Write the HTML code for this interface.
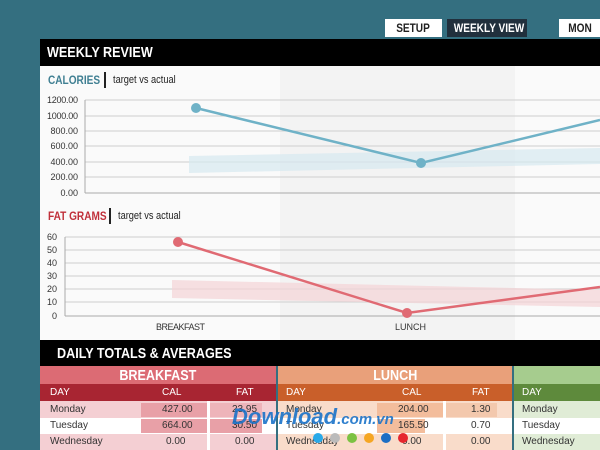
<!DOCTYPE html>
<html><head><style>
*{margin:0;padding:0;box-sizing:border-box}
body{width:600px;height:450px;overflow:hidden;background:#346f80;font-family:"Liberation Sans",sans-serif;position:relative}
.a{position:absolute}
.n{display:inline-block;transform:scaleX(.84);transform-origin:0 0;white-space:nowrap}
.c{display:inline-block;transform:scaleX(.84);transform-origin:50% 0;white-space:nowrap}
.btn{position:absolute;top:19px;height:18px;font-size:12px;font-weight:bold;text-align:center;line-height:18px}
.t{font-size:11px;color:#222}
.cell{position:absolute;font-size:10px;color:#333;line-height:16px}
</style></head><body>
<div class="btn" style="left:385px;width:57px;background:#fff;color:#222"><span class="c">SETUP</span></div>
<div class="btn" style="left:447px;width:80px;background:#21303d;color:#fff"><span class="c">WEEKLY VIEW</span></div>
<div class="btn" style="left:559px;width:41px;background:#fff;color:#222"><span class="c">MON</span></div>
<div class="a" style="left:40px;top:39px;width:560px;height:27px;background:#000;color:#fff;font-size:15px;font-weight:bold;line-height:28px;padding-left:7px"><span class="n">WEEKLY REVIEW</span></div>
<div class="a" style="left:40px;top:66px;width:560px;height:274px;background:#fafafa"></div>
<div class="a" style="left:280px;top:66px;width:235px;height:274px;background:#f3f3f3"></div>
<div class="a" style="left:48px;top:73px;font-size:12px;font-weight:bold;color:#3f7f92"><span class="n">CALORIES</span></div>
<div class="a" style="left:104px;top:72px;width:2px;height:16px;background:#222"></div>
<div class="a t" style="left:113px;top:74px"><span class="n">target vs actual</span></div>
<div class="a" style="left:48px;top:209px;font-size:12px;font-weight:bold;color:#c0303a"><span class="n">FAT GRAMS</span></div>
<div class="a" style="left:109px;top:208px;width:2px;height:16px;background:#222"></div>
<div class="a t" style="left:118px;top:210px"><span class="n">target vs actual</span></div>
<svg class="a" style="left:0;top:0" width="600" height="340" font-family="Liberation Sans" font-size="9" fill="#333">
<g stroke="#cfcfcf" stroke-width="1">
<line x1="85" y1="100" x2="600" y2="100"/><line x1="85" y1="116" x2="600" y2="116"/><line x1="85" y1="131" x2="600" y2="131"/><line x1="85" y1="146" x2="600" y2="146"/><line x1="85" y1="162" x2="600" y2="162"/><line x1="85" y1="177" x2="600" y2="177"/>
<line x1="65" y1="237" x2="600" y2="237"/><line x1="65" y1="250" x2="600" y2="250"/><line x1="65" y1="263" x2="600" y2="263"/><line x1="65" y1="276" x2="600" y2="276"/><line x1="65" y1="289" x2="600" y2="289"/><line x1="65" y1="302" x2="600" y2="302"/>
</g>
<g stroke="#aaa"><line x1="85" y1="100" x2="85" y2="193"/><line x1="85" y1="193" x2="600" y2="193"/><line x1="65" y1="237" x2="65" y2="316"/><line x1="65" y1="316" x2="600" y2="316"/></g>
<g text-anchor="end"><text x="78" y="103" textLength="31">1200.00</text><text x="78" y="119" textLength="31">1000.00</text><text x="78" y="134">800.00</text><text x="78" y="149">600.00</text><text x="78" y="165">400.00</text><text x="78" y="180">200.00</text><text x="78" y="196">0.00</text>
<text x="57" y="240">60</text><text x="57" y="253">50</text><text x="57" y="266">40</text><text x="57" y="279">30</text><text x="57" y="292">20</text><text x="57" y="305">10</text><text x="57" y="319">0</text></g>
<polygon points="189,156 600,148 600,164 189,173" fill="#d6e8ef" opacity="0.7"/>
<polygon points="172,280 600,290 600,307 172,298" fill="#f3d3d5" opacity="0.7"/>
<polyline points="196,108 421,163 600,120" fill="none" stroke="#6fb2c7" stroke-width="2.5"/>
<circle cx="196" cy="108" r="5" fill="#6fb2c7"/><circle cx="421" cy="163" r="5" fill="#6fb2c7"/>
<polyline points="178,242 407,313 600,287" fill="none" stroke="#e06a73" stroke-width="2.5"/>
<circle cx="178" cy="242" r="5" fill="#e06a73"/><circle cx="407" cy="313" r="5" fill="#e06a73"/>
<text x="156" y="330" textLength="49">BREAKFAST</text><text x="395" y="330">LUNCH</text>
</svg>
<div class="a" style="left:40px;top:340px;width:560px;height:26px;background:#000;color:#fff;font-size:15px;font-weight:bold;line-height:27px;padding-left:17px"><span class="n">DAILY TOTALS &amp; AVERAGES</span></div>
<div class="a" style="left:40px;top:366px;width:236px;height:18px;background:#dc6b74;color:#fff;font-weight:bold;font-size:15px;text-align:center;line-height:19px"><span class="c">BREAKFAST</span></div>
<div class="a" style="left:40px;top:384px;width:236px;height:17px;background:#a82532"></div>
<div class="a" style="left:40px;top:401px;width:236px;height:17px;background:#f4cfd3"></div>
<div class="a" style="left:40px;top:418px;width:236px;height:16px;background:#fff"></div>
<div class="a" style="left:40px;top:434px;width:236px;height:16px;background:#f4cfd3"></div>
<div class="a" style="left:141px;top:403px;width:66px;height:14px;background:#e8a0a7"></div>
<div class="a" style="left:141px;top:419px;width:66px;height:14px;background:#e8a0a7"></div>
<div class="a" style="left:210px;top:403px;width:52px;height:14px;background:#eeb4ba"></div>
<div class="a" style="left:210px;top:419px;width:52px;height:14px;background:#e8a0a7"></div>
<div class="a" style="left:207px;top:401px;width:3px;height:49px;background:#fff"></div>
<div class="cell" style="left:50px;top:385px;color:#fff">DAY</div><div class="cell" style="left:162px;top:385px;color:#fff">CAL</div><div class="cell" style="left:236px;top:385px;color:#fff">FAT</div>
<div class="cell" style="left:50px;top:402px">Monday</div><div class="cell" style="left:162px;top:402px">427.00</div><div class="cell" style="left:232px;top:402px">23.95</div>
<div class="cell" style="left:50px;top:418px">Tuesday</div><div class="cell" style="left:162px;top:418px">664.00</div><div class="cell" style="left:232px;top:418px">30.50</div>
<div class="cell" style="left:50px;top:434px">Wednesday</div><div class="cell" style="left:166px;top:434px">0.00</div><div class="cell" style="left:235px;top:434px">0.00</div>
<div class="a" style="left:276px;top:366px;width:2px;height:84px;background:#346f80"></div>
<div class="a" style="left:278px;top:366px;width:234px;height:18px;background:#e9a07a;color:#fff;font-weight:bold;font-size:15px;text-align:center;line-height:19px"><span class="c">LUNCH</span></div>
<div class="a" style="left:278px;top:384px;width:234px;height:17px;background:#c95f2a"></div>
<div class="a" style="left:278px;top:401px;width:234px;height:17px;background:#f9dcca"></div>
<div class="a" style="left:278px;top:418px;width:234px;height:16px;background:#fff"></div>
<div class="a" style="left:278px;top:434px;width:234px;height:16px;background:#f9dcca"></div>
<div class="a" style="left:377px;top:403px;width:66px;height:14px;background:#f3bd9c"></div>
<div class="a" style="left:377px;top:419px;width:48px;height:14px;background:#f3bd9c"></div>
<div class="a" style="left:446px;top:403px;width:51px;height:14px;background:#f3c8ad"></div>
<div class="a" style="left:443px;top:401px;width:3px;height:49px;background:#fff"></div>
<div class="cell" style="left:286px;top:385px;color:#fff">DAY</div><div class="cell" style="left:402px;top:385px;color:#fff">CAL</div><div class="cell" style="left:472px;top:385px;color:#fff">FAT</div>
<div class="cell" style="left:286px;top:402px">Monday</div><div class="cell" style="left:398px;top:402px">204.00</div><div class="cell" style="left:471px;top:402px">1.30</div>
<div class="cell" style="left:286px;top:418px">Tuesday</div><div class="cell" style="left:398px;top:418px">165.50</div><div class="cell" style="left:471px;top:418px">0.70</div>
<div class="cell" style="left:286px;top:434px">Wednesday</div><div class="cell" style="left:402px;top:434px">0.00</div><div class="cell" style="left:471px;top:434px">0.00</div>
<div class="a" style="left:512px;top:366px;width:2px;height:84px;background:#346f80"></div>
<div class="a" style="left:514px;top:366px;width:86px;height:18px;background:#a6cc8e"></div>
<div class="a" style="left:514px;top:384px;width:86px;height:17px;background:#5e8a3c"></div>
<div class="a" style="left:514px;top:401px;width:86px;height:17px;background:#e0ecd6"></div>
<div class="a" style="left:514px;top:418px;width:86px;height:16px;background:#fff"></div>
<div class="a" style="left:514px;top:434px;width:86px;height:16px;background:#e0ecd6"></div>
<div class="cell" style="left:522px;top:385px;color:#fff">DAY</div>
<div class="cell" style="left:522px;top:402px">Monday</div><div class="cell" style="left:522px;top:418px">Tuesday</div><div class="cell" style="left:522px;top:434px">Wednesday</div>
<div class="a" style="left:232px;top:404px;font-size:22px;font-weight:bold;font-style:italic;color:#1a73c9;opacity:.9">Download<span style="font-size:15px">.com.vn</span></div>
<svg class="a" style="left:310px;top:431px" width="100" height="14"><circle cx="8" cy="7" r="5" fill="#29a9e8"/><circle cx="25" cy="7" r="5" fill="#bbb"/><circle cx="42" cy="7" r="5" fill="#7cc242"/><circle cx="59" cy="7" r="5" fill="#f5a623"/><circle cx="76" cy="7" r="5" fill="#1d6fc4"/><circle cx="93" cy="7" r="5" fill="#e6262e"/></svg>
</body></html>
